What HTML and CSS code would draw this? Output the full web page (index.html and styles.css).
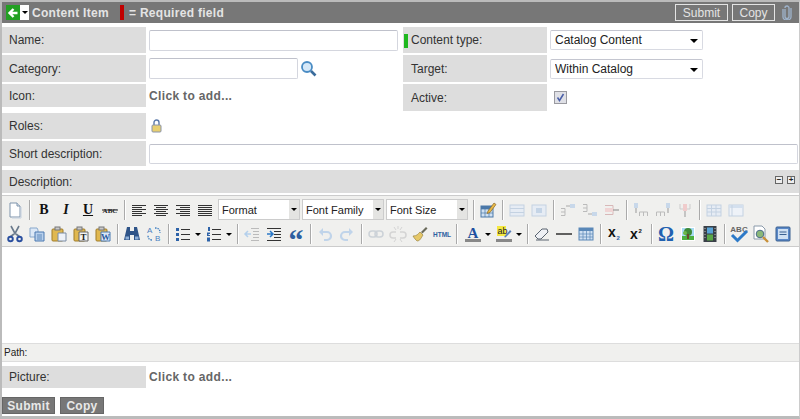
FILE: index.html
```html
<!DOCTYPE html>
<html lang="en">
<head>
    <meta charset="UTF-8">
    <title>Content Item</title>
    <link rel="stylesheet" href="styles.css">
</head>
<body>
<div class="frame">
    <div class="header">
        <span class="back">
            <span class="back-green"><svg width="14" height="14" viewBox="0 0 14 14"><path d="M11.5 7H4M7.5 3 3.5 7l4 4" fill="none" stroke="#fff" stroke-width="2.4"/></svg></span>
            <span class="back-menu"></span>
        </span>
        <span class="header-title">Content Item</span>
        <span class="required-mark"></span>
        <span class="header-title">= Required field</span>
        <span class="header-right">
            <button class="head-btn submit-btn">Submit</button>
            <button class="head-btn copy-btn">Copy</button>
            <svg class="clip" width="10" height="15" viewBox="0 0 10 15"><path d="M3 4v7.5a2 2 0 0 0 4 0V3a2 2 0 0 0-4 0M1 4v8a4 3 0 0 0 8 0V3" fill="none" stroke="#9fb4cc" stroke-width="1.3"/></svg>
        </span>
    </div>

    <div class="form-grid">
        <div class="label">Name:</div>
        <div class="value"><input class="text name-input" type="text"></div>
        <div class="label right"><span class="green-mark"></span>Content type:</div>
        <div class="value"><span class="select"><select><option>Catalog Content</option></select></span></div>

        <div class="label">Category:</div>
        <div class="value">
            <input class="text cat-input" type="text">
            <svg class="search" width="17" height="17" viewBox="0 0 17 17"><circle cx="7" cy="7" r="5" fill="#d5e8f8" stroke="#4a8cc4" stroke-width="1.8"/><path d="M11 11l4.500 4.500" stroke="#3a6c9c" stroke-width="2.600"/></svg>
        </div>
        <div class="label right">Target:</div>
        <div class="value"><span class="select"><select><option>Within Catalog</option></select></span></div>

        <div class="label short">Icon:</div>
        <div class="value top"><span class="add-link">Click to add...</span></div>
        <div class="label right">Active:</div>
        <div class="value">
            <span class="check"><svg width="9" height="9" viewBox="0 0 9 9"><path d="M1.500 4.500 3.500 7.500 7.500 1" fill="none" stroke="#4a5fa8" stroke-width="1.500"/></svg></span>
        </div>

        <div class="label">Roles:</div>
        <div class="value wide">
            <svg class="lock" width="11" height="14" viewBox="0 0 11 14"><path d="M3 6V3.500a2.500 2.500 0 0 1 5 0V6" fill="none" stroke="#5a78a8" stroke-width="1.400"/><rect x="1" y="6" width="9" height="7" rx="1" fill="#e8cf70" stroke="#8a94a8"/></svg>
        </div>

        <div class="label">Short description:</div>
        <div class="value wide"><input class="text short-input" type="text"></div>
    </div>

    <div class="desc-bar">
        <span>Description:</span>
        <span class="desc-tools"><span class="mini">&minus;</span><span class="mini">+</span></span>
    </div>

    <div class="toolbar">
        <div class="tool-row">
            <span class="ico"><svg viewBox="0 0 16 16"><path d="M3 1h7l3 3v11H3z" fill="#fff" stroke="#7f94ac"/><path d="M10 1v3h3" fill="#dde6f0" stroke="#7f94ac"/><path d="M14 5v11H5" fill="none" stroke="#c4d0de"/></svg></span>
            <span class="sep"></span>
            <span class="ico glyph bold">B</span>
            <span class="ico glyph ital">I</span>
            <span class="ico glyph under">U</span>
            <span class="ico"><svg viewBox="0 0 16 16"><text x="8" y="11" class="tiny-text" text-anchor="middle">ABC</text><path d="M0 8h16" stroke="#222"/></svg></span>
            <span class="sep"></span>
            <span class="ico"><svg viewBox="0 0 16 16"><path d="M1 3.500h14M1 5.500h10M1 7.500h14M1 9.500h10M1 11.500h14M1 13.500h10" stroke="#333"/></svg></span>
            <span class="ico"><svg viewBox="0 0 16 16"><path d="M1 3.500h14M3 5.500h10M1 7.500h14M3 9.500h10M1 11.500h14M3 13.500h10" stroke="#333"/></svg></span>
            <span class="ico"><svg viewBox="0 0 16 16"><path d="M1 3.500h14M5 5.500h10M1 7.500h14M5 9.500h10M1 11.500h14M5 13.500h10" stroke="#333"/></svg></span>
            <span class="ico"><svg viewBox="0 0 16 16"><path d="M1 3.500h14M1 5.500h14M1 7.500h14M1 9.500h14M1 11.500h14M1 13.500h14" stroke="#333"/></svg></span>
            <span class="combo">Format</span>
            <span class="combo">Font Family</span>
            <span class="combo">Font Size</span>
            <span class="sep after-combo"></span>
            <span class="ico"><svg viewBox="0 0 16 16"><rect x="1" y="4" width="12" height="11" fill="#cfe0f2" stroke="#4a78a8"/><path d="M1 7h12M5 7v8M9 7v8M1 11h12" stroke="#4a78a8" stroke-width=".7"/><path d="M1 4h12v3H1z" fill="#4a78a8"/><path d="M8 9l6-8 2 1.500-6 8-3 1z" fill="#e8b848" stroke="#8a6a28" stroke-width=".7"/></svg></span>
            <span class="sep"></span>
            <span class="ico off"><svg viewBox="0 0 16 16"><rect x="1" y="3" width="14" height="11" fill="#e6ecf4" stroke="#c4d2e2"/><path d="M1 6.500h14M1 10.500h14" stroke="#c4d2e2"/></svg></span>
            <span class="ico off"><svg viewBox="0 0 16 16"><rect x="1" y="3" width="14" height="11" fill="#e6ecf4" stroke="#c4d2e2"/><rect x="5" y="6" width="6" height="5" fill="#c4d4e6"/></svg></span>
            <span class="sep"></span>
            <span class="ico off"><svg viewBox="0 0 16 16"><path d="M1 6.500h4v7H1M1 10h4" fill="none" stroke="#bbb"/><rect x="10" y="2" width="5" height="4" fill="#c8d8ea"/><path d="M6 4h4" stroke="#aaa"/></svg></span>
            <span class="ico off"><svg viewBox="0 0 16 16"><path d="M1 2.500h4v7H1M1 6h4" fill="none" stroke="#bbb"/><rect x="10" y="10" width="5" height="4" fill="#c8d8ea"/><path d="M6 12h4" stroke="#aaa"/></svg></span>
            <span class="ico off"><svg viewBox="0 0 16 16"><path d="M1 3.500h8v9H1M1 8h8" fill="none" stroke="#d8b8b8"/><rect x="1" y="6" width="8" height="4" fill="#f0d4d4"/><path d="M9 8h6" stroke="#888"/></svg></span>
            <span class="sep"></span>
            <span class="ico off"><svg viewBox="0 0 16 16"><path d="M6.500 14v-4h8v4M10.500 10v4" fill="none" stroke="#bbb"/><rect x="1" y="1" width="4" height="5" fill="#c8d8ea"/><path d="M3 6v5" stroke="#999"/></svg></span>
            <span class="ico off"><svg viewBox="0 0 16 16"><path d="M1.500 14v-4h8v4M5.500 10v4" fill="none" stroke="#bbb"/><rect x="11" y="1" width="4" height="5" fill="#c8d8ea"/><path d="M13 6v5" stroke="#999"/></svg></span>
            <span class="ico off"><svg viewBox="0 0 16 16"><path d="M3 2v5h10V2" fill="none" stroke="#ccc"/><rect x="6" y="2" width="4" height="7" fill="#f0cccc"/><path d="M8 9v6" stroke="#999"/></svg></span>
            <span class="sep"></span>
            <span class="ico off"><svg viewBox="0 0 16 16"><rect x="1" y="3" width="14" height="11" fill="#e6ecf4" stroke="#c4d2e2"/><path d="M1 6.500h14M1 10h14M5.500 3v11M10 3v11" stroke="#c4d2e2"/></svg></span>
            <span class="ico off"><svg viewBox="0 0 16 16"><rect x="1" y="3" width="14" height="11" fill="#eef2f8" stroke="#c4d2e2"/><rect x="1" y="3" width="14" height="3" fill="#d4e0ee"/><path d="M4 3v11" stroke="#c4d2e2"/></svg></span>
        </div>

        <div class="tool-row">
            <span class="ico"><svg viewBox="0 0 16 16"><path d="M4 0l4 7.500L12 0M7 8l-4 3M9 8l4 3" fill="none" stroke="#6a7a8c" stroke-width="1.600"/><circle cx="3.500" cy="13" r="2.300" fill="none" stroke="#2a4f9f" stroke-width="1.900"/><circle cx="12.500" cy="13" r="2.300" fill="none" stroke="#2a4f9f" stroke-width="1.900"/></svg></span>
            <span class="ico"><svg viewBox="0 0 16 16"><path d="M1 2h7l1 2v7H1z" fill="#dce8f6" stroke="#88a8cc"/><path d="M6 6h9v9H6z" fill="#b8d0ec" stroke="#4a78b0"/><path d="M8 9h5M8 11h5M8 13h5" stroke="#4a78b0" stroke-width=".8"/></svg></span>
            <span class="ico"><svg viewBox="0 0 16 16"><rect x="1" y="3" width="11" height="12" rx="1" fill="#e0b850" stroke="#a07c28"/><rect x="4" y="1" width="5" height="3" fill="#c8c8c8" stroke="#777"/><path d="M7 7h8v8H7z" fill="#eef2f8" stroke="#7a8ca4"/></svg></span>
            <span class="ico"><svg viewBox="0 0 16 16"><rect x="1" y="3" width="11" height="12" rx="1" fill="#e0b850" stroke="#a07c28"/><rect x="4" y="1" width="5" height="3" fill="#c8c8c8" stroke="#777"/><path d="M6 6h9v9H6z" fill="#f4f4f4" stroke="#666"/><text x="10.500" y="14" class="paste-t" text-anchor="middle">T</text></svg></span>
            <span class="ico"><svg viewBox="0 0 16 16"><rect x="1" y="3" width="11" height="12" rx="1" fill="#e0b850" stroke="#a07c28"/><rect x="4" y="1" width="5" height="3" fill="#c8c8c8" stroke="#777"/><path d="M6 6h9v9H6z" fill="#dce8f6" stroke="#4a78b0"/><text x="10.500" y="14" class="paste-w" text-anchor="middle">W</text></svg></span>
            <span class="sep"></span>
            <span class="ico"><svg viewBox="0 0 16 16"><path d="M3 1h3v4h4V1h3l3 13h-6V9H6v5H0z" fill="#2f5488"/><rect x="1.500" y="10.500" width="3.500" height="3" fill="#8fb0d8"/><rect x="11" y="10.500" width="3.500" height="3" fill="#8fb0d8"/></svg></span>
            <span class="ico"><svg viewBox="0 0 16 16"><text x="1" y="7" class="rep-a">A</text><text x="9" y="15" class="rep-b">B</text><path d="M9 2c4 0 5 2 5 5M6 14c-3 0-4-2-4-5" fill="none" stroke="#3a7cc0" stroke-width="1.300" stroke-dasharray="1.500 1"/></svg></span>
            <span class="sep"></span>
            <span class="split">
                <span class="ico"><svg viewBox="0 0 16 16"><path d="M1 2h3v3H1zM1 7h3v3H1zM1 12h3v3H1z" fill="#2d62a8"/><path d="M6 3.500h9M6 8.500h9M6 13.500h9" stroke="#333"/></svg></span>
                <span class="arrow"></span>
            </span>
            <span class="split">
                <span class="ico"><svg viewBox="0 0 16 16"><path d="M2 1h2v4H2zM1 6.500h3v1.500H2.500v1H4v1H1zM1 11.500h3v4H1z" fill="#2d62a8"/><path d="M6 3.500h9M6 8.500h9M6 13.500h9" stroke="#333"/></svg></span>
                <span class="arrow"></span>
            </span>
            <span class="sep"></span>
            <span class="ico off"><svg viewBox="0 0 16 16"><path d="M7 2.500h8M9 5.500h6M9 8.500h6M9 11.500h6M7 14.500h8" stroke="#bbb"/><path d="M1 8h6M4 5 1 8l3 3" fill="none" stroke="#b4d0ec" stroke-width="1.500"/></svg></span>
            <span class="ico"><svg viewBox="0 0 16 16"><path d="M1 2.500h14M8 5.500h7M8 8.500h7M8 11.500h7M1 14.500h14" stroke="#333"/><path d="M1 8h5M4 5l3 3-3 3" fill="none" stroke="#2d7ac8" stroke-width="1.500"/></svg></span>
            <span class="ico quote">&ldquo;</span>
            <span class="sep"></span>
            <span class="ico off"><svg viewBox="0 0 16 16"><path d="M4 6h6a3.500 3.500 0 0 1 0 8H7" fill="none" stroke="#c0d4ea" stroke-width="2.200"/><path d="M6 2 2 6l4 4z" fill="#c0d4ea"/></svg></span>
            <span class="ico off"><svg viewBox="0 0 16 16"><path d="M12 6H6a3.500 3.500 0 0 0 0 8h3" fill="none" stroke="#c0d4ea" stroke-width="2.200"/><path d="M10 2l4 4-4 4z" fill="#c0d4ea"/></svg></span>
            <span class="sep"></span>
            <span class="ico off"><svg viewBox="0 0 16 16"><rect x="1" y="5" width="8" height="6" rx="3" fill="none" stroke="#ccd2d8" stroke-width="1.500"/><rect x="7" y="5" width="8" height="6" rx="3" fill="none" stroke="#ccd2d8" stroke-width="1.500"/></svg></span>
            <span class="ico off"><svg viewBox="0 0 16 16"><path d="M6 6H3a2.500 2.500 0 0 0 0 6h3M10 6h3a2.500 2.500 0 0 1 0 6h-3" fill="none" stroke="#d4d4d4" stroke-width="1.500"/><path d="M4 1l2 3M12 1l-2 3M8 0v3M4 16l2-3M12 16l-2-3" stroke="#d4d4d4"/></svg></span>
            <span class="ico"><svg viewBox="0 0 16 16"><path d="M9 6l5-5 1.500 1.500-5 5z" fill="#6a6a5a"/><path d="M1 10c4 0 5-2 7-4l3 3c-2 3-3 6-6 6-1-1-3-3-4-5z" fill="#e6c868" stroke="#9a8440" stroke-width=".7"/></svg></span>
            <span class="ico"><svg viewBox="0 0 16 16"><text x="8" y="10.500" class="html-text" text-anchor="middle">HTML</text></svg></span>
            <span class="sep sep-gap"></span>
            <span class="split">
                <span class="ico"><svg viewBox="0 0 16 16"><text x="8" y="11.500" class="color-a" text-anchor="middle">A</text><rect x="0" y="13" width="16" height="3" fill="#888"/></svg></span>
                <span class="arrow"></span>
            </span>
            <span class="split">
                <span class="ico"><svg viewBox="0 0 16 16"><rect x="1" y="0" width="9" height="10" fill="#f4e840"/><text x="1.500" y="8" class="color-ab">ab</text><path d="M8 11l6-7 1.500 1.500-6 6z" fill="#5a80b8"/><rect x="0" y="13" width="16" height="3" fill="#888"/></svg></span>
                <span class="arrow"></span>
            </span>
            <span class="sep"></span>
            <span class="ico"><svg viewBox="0 0 16 16"><path d="M1 10l7-7h5l1 3-7 7H4z" fill="#eef0f4" stroke="#5a6470"/><path d="M2 14h13" stroke="#5a6470"/></svg></span>
            <span class="ico"><svg viewBox="0 0 16 16"><path d="M0 8h16" stroke="#222" stroke-width="1.400"/></svg></span>
            <span class="ico"><svg viewBox="0 0 16 16"><rect x="1" y="2" width="14" height="12" fill="#cfe0f2" stroke="#5a88b8"/><rect x="1" y="2" width="14" height="3" fill="#5a88b8"/><path d="M5 5v9M8.500 5v9M12 5v9M1 8h14M1 11h14" stroke="#5a88b8" stroke-width=".7"/></svg></span>
            <span class="sep"></span>
            <span class="ico"><svg viewBox="0 0 16 16"><text x="1" y="11" class="script-x">x</text><text x="9.500" y="14" class="script-n">2</text></svg></span>
            <span class="ico"><svg viewBox="0 0 16 16"><text x="1" y="13" class="script-x">x</text><text x="9.500" y="7" class="script-n dark">2</text></svg></span>
            <span class="sep"></span>
            <span class="ico omega">&Omega;</span>
            <span class="ico"><svg viewBox="0 0 16 16"><rect x="1" y="1" width="14" height="14" fill="#fff"/><rect x="2" y="2" width="12" height="12" fill="#a8dcf4"/><rect x="2" y="10" width="12" height="4" fill="#4cb040"/><circle cx="8" cy="6" r="4" fill="#3e8a38"/><circle cx="5" cy="7" r="2" fill="#6cb848"/><rect x="7" y="8" width="2" height="5" fill="#6a4a28"/></svg></span>
            <span class="ico"><svg viewBox="0 0 16 16"><rect x="1.500" y="0" width="13" height="16" fill="#3a4048"/><rect x="5" y="1.500" width="6" height="6" fill="#58a4d8"/><rect x="5" y="8.500" width="6" height="6" fill="#5aa848"/><path d="M3 2v12M13 2v12" stroke="#bbb" stroke-width="1" stroke-dasharray="1 2"/></svg></span>
            <span class="sep"></span>
            <span class="ico"><svg viewBox="0 0 16 16"><text x="8" y="5.500" class="spell-text" text-anchor="middle">ABC</text><path d="M1 9l5.500 5.500L16 5" fill="none" stroke="#2d7ac8" stroke-width="3"/></svg></span>
            <span class="ico"><svg viewBox="0 0 16 16"><path d="M1 0h8l3 3v10H1z" fill="#fff" stroke="#8a9aaa"/><circle cx="7" cy="8" r="3.800" fill="#8ab878" stroke="#4a6a8a"/><path d="M10 11l5 5" stroke="#c89038" stroke-width="2.400"/></svg></span>
            <span class="ico"><svg viewBox="0 0 16 16"><rect x="1" y="1" width="14" height="14" rx="1" fill="#5a88c8" stroke="#3a6090"/><rect x="3" y="3" width="10" height="10" fill="#cfe0f2"/><path d="M4.500 6h7M4.500 8.500h7" stroke="#3a6090"/></svg></span>
        </div>
    </div>

    <div class="editor"></div>
    <div class="path-bar">Path:</div>

    <div class="picture-row">
        <div class="label">Picture:</div>
        <span class="add-link">Click to add...</span>
    </div>

    <div class="footer">
        <button class="foot-btn submit-foot">Submit</button>
        <button class="foot-btn copy-foot">Copy</button>
    </div>
</div>
</body>
</html>
```

FILE: styles.css
```css
* {
    box-sizing: border-box;
}

body {
    margin: 0;
    font-family: "Liberation Sans", Arial, sans-serif;
    font-size: 12px;
    color: #333;
    background: #fff;
}

.frame {
    height: 419px;
    overflow: hidden;
    border-top: 2px solid #bbb;
    border-left: 2px solid #bbb;
    border-right: 1px solid #ccc;
    border-bottom: 3px solid #bbb;
}

/* top bar */
.header {
    height: 21px;
    margin-right: -1px;
    background: #777;
    display: flex;
    align-items: center;
    color: #e4e4e4;
    padding-left: 4px;
}

.back {
    display: flex;
    width: 23px;
    height: 15px;
    background: #fff;
    margin-right: 3px;
}

.back-green {
    width: 14px;
    height: 15px;
    background: #22a022;
    display: flex;
    align-items: center;
    justify-content: center;
}

.back-menu {
    width: 0;
    height: 0;
    margin: 6px 0 0 2px;
    border-left: 3px solid transparent;
    border-right: 3px solid transparent;
    border-top: 3px solid #000;
}

.header-title {
    font-weight: bold;
    letter-spacing: .3px;
}

.required-mark {
    width: 4px;
    height: 15px;
    background: #c00000;
    margin: 0 5px 0 11px;
}

.header-right {
    margin-left: auto;
    display: flex;
    align-items: center;
    padding-right: 8px;
}

.head-btn {
    height: 17px;
    padding: 0;
    background: none;
    border: 1px solid #e4e4e4;
    color: #e4e4e4;
    font-family: inherit;
    font-size: 12px;
    line-height: 14px;
}

.submit-btn {
    width: 53px;
    margin-right: 4px;
}

.copy-btn {
    width: 43px;
    margin-right: 7px;
}

/* form table */
.form-grid {
    display: grid;
    grid-template-columns: 144px 257px 144px 1fr;
    grid-template-rows: 26px 27px 27px 26px 25px;
    row-gap: 2px;
    margin-top: 4px;
}

.label {
    background: #ddd;
    display: flex;
    align-items: center;
    padding-left: 7px;
}

.label.right {
    padding-left: 8px;
    position: relative;
}

.label.short {
    height: 23px;
}

.green-mark {
    position: absolute;
    left: 1px;
    top: 7px;
    width: 4px;
    height: 14px;
    background: #1fb81f;
}

.value {
    display: flex;
    align-items: center;
    padding-left: 3px;
}

.value.top {
    align-items: flex-start;
    padding-top: 5px;
}

.value.wide {
    grid-column: 2 / -1;
}

.text {
    height: 21px;
    padding: 1px 3px;
    border: 1px solid #d4d6de;
    border-top-color: #bfc1cb;
    border-radius: 2px;
    background: #fff;
    font-family: inherit;
    font-size: 12px;
}

.name-input {
    width: 249px;
}

.cat-input {
    width: 149px;
}

.short-input {
    width: 649px;
    height: 20px;
}

.search {
    margin-left: 2px;
}

.lock {
    margin-left: 2px;
}

.add-link {
    font-weight: bold;
    color: #666;
    letter-spacing: .35px;
}

.select {
    position: relative;
    display: block;
    width: 153px;
    height: 20px;
    margin-left: 0;
}

.select select {
    appearance: none;
    width: 100%;
    height: 100%;
    padding: 0 0 0 4px;
    border: 1px solid #d8dae2;
    border-top-color: #c4c6d0;
    border-radius: 2px;
    background: #fff;
    color: #222;
    font-family: inherit;
    font-size: 12px;
}

.select::after {
    content: "";
    position: absolute;
    right: 5px;
    top: 9px;
    border-left: 4px solid transparent;
    border-right: 4px solid transparent;
    border-top: 4px solid #000;
}

.check {
    width: 13px;
    height: 13px;
    margin: 0 0 0 4px;
    border: 1px solid #9a9aa0;
    background: #dfe0e6;
    display: flex;
    align-items: center;
    justify-content: center;
}

/* description editor */
.desc-bar {
    height: 23px;
    margin-top: 4px;
    background: #ddd;
    display: flex;
    align-items: center;
    justify-content: space-between;
    padding: 0 4px 0 7px;
}

.desc-tools {
    display: flex;
    gap: 4px;
    margin-top: -3px;
}

.mini {
    width: 8px;
    height: 8px;
    border: 1px solid #666;
    background: #eee;
    font-size: 8px;
    font-weight: bold;
    line-height: 6px;
    text-align: center;
    color: #222;
}

.toolbar {
    margin-top: 2px;
    height: 52px;
    padding: 1px 0 0 2px;
    background: #f0f0ee;
    border-top: 1px solid #ccc;
    border-bottom: 1px solid #ccc;
}

.tool-row {
    display: flex;
    align-items: center;
    height: 25px;
}

.tool-row + .tool-row {
    height: 24px;
}

.ico {
    width: 22px;
    height: 20px;
    flex: none;
    display: flex;
    align-items: center;
    justify-content: center;
}

.ico svg {
    width: 16px;
    height: 16px;
    overflow: visible;
}

.glyph {
    font-family: "Liberation Serif", serif;
    font-size: 14px;
    font-weight: bold;
    color: #111;
}

.ital {
    font-style: italic;
}

.under {
    text-decoration: underline;
}

.quote {
    font-family: "Liberation Serif", serif;
    font-size: 30px;
    font-weight: bold;
    color: #2d5fa0;
    line-height: 30px;
    padding-top: 12px;
}

.omega {
    font-family: "Liberation Serif", serif;
    font-size: 20px;
    font-weight: bold;
    color: #2060b0;
}

.tiny-text {
    font: bold 7px "Liberation Serif", serif;
    fill: #222;
}

.paste-t {
    font: bold 9px "Liberation Serif", serif;
    fill: #222;
}

.paste-w {
    font: bold 9px "Liberation Serif", serif;
    fill: #2a5aa0;
}

.rep-a,
.rep-b {
    font: 8px "Liberation Sans", sans-serif;
    fill: #4a80c0;
}

.html-text {
    font: bold 6.500px "Liberation Sans", sans-serif;
    fill: #2d5fa0;
}

.color-a {
    font: bold 15px "Liberation Serif", serif;
    fill: #2050a0;
}

.color-ab {
    font: 9px "Liberation Sans", sans-serif;
    fill: #222;
}

.script-x {
    font: bold 14px "Liberation Sans", sans-serif;
    fill: #111;
}

.script-n {
    font: bold 6px "Liberation Sans", sans-serif;
    fill: #2d62a8;
}

.script-n.dark {
    fill: #111;
}

.spell-text {
    font: bold 8px "Liberation Sans", sans-serif;
    fill: #666;
}

.sep {
    width: 7px;
    height: 20px;
    flex: none;
    position: relative;
}

.sep::before {
    content: "";
    position: absolute;
    left: 3px;
    top: 0;
    width: 1px;
    height: 20px;
    background: #aaa;
    box-shadow: 1px 0 0 #fff;
}

.sep.after-combo {
    margin-left: 2px;
}

.sep.sep-gap {
    margin-right: 2px;
}

.combo {
    width: 82px;
    height: 21px;
    flex: none;
    margin-left: 2px;
    padding-left: 3px;
    font-size: 11px;
    line-height: 20px;
    color: #222;
    background: #fff;
    border: 1px solid #ccc;
    position: relative;
}

.combo:first-of-type {
    margin-left: 0;
}

.combo::after {
    content: "";
    position: absolute;
    right: 0;
    top: 0;
    width: 10px;
    height: 19px;
    background: #e4e4e2;
}

.combo::before {
    content: "";
    position: absolute;
    right: 2px;
    top: 8px;
    z-index: 1;
    border-left: 3px solid transparent;
    border-right: 3px solid transparent;
    border-top: 3px solid #000;
}

.split {
    width: 31px;
    flex: none;
    display: flex;
    align-items: center;
}

.arrow {
    width: 0;
    height: 0;
    margin-left: 1px;
    border-left: 3px solid transparent;
    border-right: 3px solid transparent;
    border-top: 3px solid #000;
}

.editor {
    height: 96px;
    background: #fff;
}

.path-bar {
    height: 19px;
    padding-left: 2px;
    font-size: 10px;
    line-height: 18px;
    color: #222;
    background: #f0f0ee;
    border-top: 1px solid #ddd;
    border-bottom: 1px solid #ddd;
}

.picture-row {
    display: grid;
    grid-template-columns: 144px 1fr;
    height: 22px;
    margin-top: 4px;
}

.picture-row .add-link {
    padding: 4px 0 0 3px;
}

.footer {
    display: flex;
    gap: 5px;
    margin-top: 9px;
}

.foot-btn {
    height: 17px;
    padding: 0;
    background: #777;
    border: 1px solid #666;
    color: #e8e8e8;
    font-family: inherit;
    font-size: 12px;
    font-weight: bold;
    line-height: 14px;
    letter-spacing: .3px;
}

.submit-foot {
    width: 53px;
}

.copy-foot {
    width: 44px;
}
```
